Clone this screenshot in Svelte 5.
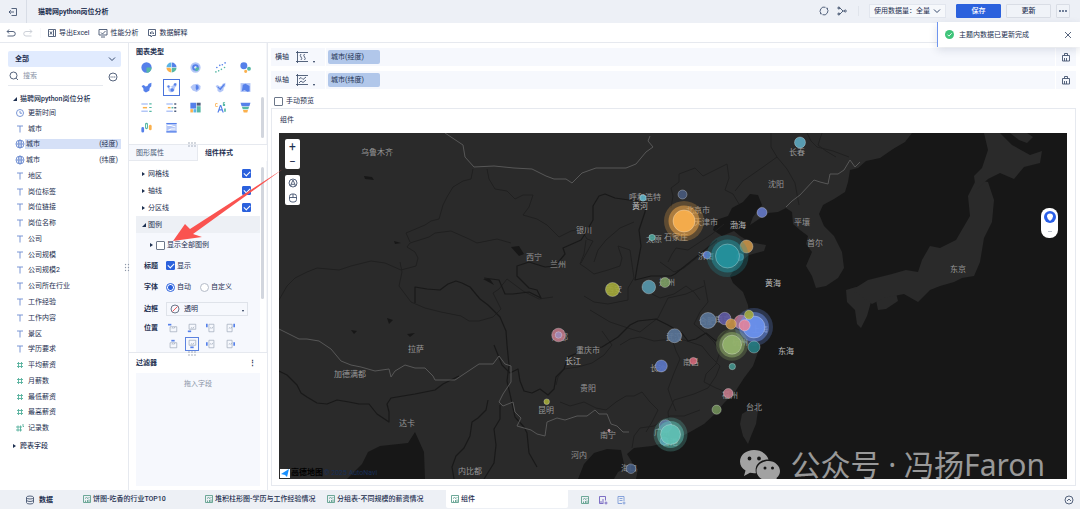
<script lang="ts">
	type Shape = [color: string, d: string];

	const blue = '#5580ea';
	const pale = '#b3c6f7';
	const green = '#56b8a4';
	const orange = '#fbb04c';

	const disc = (x: number, y: number, r: number) =>
		`M${x - r} ${y}a${r} ${r} 0 1 0 ${2 * r} 0a${r} ${r} 0 1 0 ${-2 * r} 0z`;

	const region = 'M.6 4.400L3 3.400 5 5 7 4.400 8.400 2 11.400.8 11.200 4.600 9.600 6.400 9 9.600 5.400 11.400 2.800 9.800 2.600 7.200z';

	const chartTypes: { name: string; shapes: Shape[] }[] = [
		{ name: '饼图', shapes: [[blue, disc(6, 6, 5.6)], [green, 'M6 6h5.6a5.6 5.6 0 0 1-5.6 5.6z']] },
		{
			name: '多层饼图',
			shapes: [
				[blue, 'M6.3 5.7V.5A5.300 5.300 0 0 1 11.500 5.7z'],
				[orange, 'M.5 6.300h4L5.700 7.500v4A5.300 5.300 0 0 1 .5 6.300z'],
				[green, 'M6.300 6.300h5.200a5.300 5.300 0 0 1-5.200 5.200z'],
				['#5ab4e6', 'M.5 5.700A5.300 5.300 0 0 1 5.700.5v5.200z']
			]
		},
		{
			name: '玫瑰图',
			shapes: [[pale, disc(6, 6, 5.6)], [blue, disc(6, 6, 3.6)], ['#fff', disc(6, 6, 1.3)], [green, 'M6 6h4a4 4 0 0 1-4 4z']]
		},
		{
			name: '散点图',
			shapes: [
				[blue, disc(2, 6, 0.9) + disc(5.2, 3.6, 0.9) + disc(8, 3, 0.9) + disc(11, 1, 0.9)],
				[green, disc(1, 10.8, 0.9) + disc(4, 9.6, 0.9) + disc(7, 8, 0.9) + disc(10.4, 6, 0.9)]
			]
		},
		{ name: '气泡图', shapes: [[blue, disc(4.2, 4, 3.8)], [green, disc(9.8, 7.4, 2.1)], [orange, disc(6.2, 10.2, 1.7)]] },
		{ name: '区域地图', shapes: [[blue, region]] },
		{
			name: '点地图',
			shapes: [[pale, region], ['#fff', disc(5, 6, 1.2)], [blue, disc(6.8, 8.800, 1.900) + disc(10, 2.8, 1.400) + disc(2.800, 5, 1.200)]]
		},
		{
			name: '热力地图',
			shapes: [[pale, 'M.4 5.400l3-2.800 4.800-.8 3.400 2.600-.4 3.600-3.800 3L3 9.200z'], [blue, 'M6.400 3l2.600.8.6 3-2.400 2.600-1-2.600z']]
		},
		{
			name: '流向地图',
			shapes: [[pale, region], [blue, 'M5.400 6.800L10 2l.8 1-5 6L2.600 5.800l.8-1z']]
		},
		{ name: '热力区域图', shapes: [[pale, 'M.6 1.2h10.800v9.6H.6z'], [blue, 'M3 3l3-1 4.400 2.400v5.600l-2.400.6-3-2-3 1.600.6-4z']] },
		{
			name: '分组表',
			shapes: [[pale, 'M.4 1.400h7v1.600h-7zM.4 9.400h7V11h-7z'], [orange, 'M2 5.400h4.600V7H2z'], [green, 'M9 1.400h2.600v1.200H9zM9 5.400h2.600v1.200H9zM9 9.600h2.600v1.200H9z']]
		},
		{
			name: '交叉表',
			shapes: [[pale, 'M.4 1.400h7v1.600h-7zM.4 9.400h7V11h-7z'], [orange, 'M2 5.400h3V7H2z'], [green, 'M6 5.400h2V7H6z'], ['#50607e', 'M9 1.4h2.2v1.6H9zM9 5.4h2.2V7H9zM9 9.4h2.2V11H9z']]
		},
		{
			name: '矩形树图',
			shapes: [[blue, 'M.4.8h6.400v6.400H.4z'], ['#50607e', 'M7.4.8h4.200V4H7.400z'], [green, 'M7.4 4.600h4.200v6.800H7.400z'], [orange, 'M.4 7.8h2.800v3.600H.4z'], ['#5ab4e6', 'M3.800 7.8h3v3.600h-3z']]
		},
		{
			name: '词云',
			shapes: [[blue, 'M2.600 11.400l2.800-8h1.400l2.800 8H8.200l-.7-2.200H4.700l-.7 2.200zM5.100 8h2L6.100 5z'], [orange, 'M3 1.8a2 2 0 1 0 0 3v-1a1.200 1.200 0 1 1 0-1z'], [green, 'M8.600.4h2.400v1H9.600v.7H11v2.200H8.600zM10 7h1.8v3.6H10z']]
		},
		{ name: '漏斗图', shapes: [[blue, 'M.6.8h10.800L10.200 4.600H1.800z'], [green, 'M2.100 5.2h7.800L9 8H3z'], [orange, 'M3.3 8.6h5.4L8 11.400H4z']] },
		{
			name: '箱形图',
			shapes: [[blue, 'M.4 7a1.500 1.500 0 0 1 3 0v3a1.500 1.500 0 0 1-3 0z'], [green, 'M4.400 2.400a1.600 1.600 0 0 1 3.200 0v4a1.600 1.600 0 0 1-3.200 0zM5.500 2.400v4h1v-4z'], [orange, 'M8.600 4.600a1.500 1.500 0 0 1 3 0v3a1.500 1.500 0 0 1-3 0z']]
		},
		{ name: '桑基图', shapes: [[pale, 'M.4 1h11.200v10.4H.4z'], ['#fff', 'M1.4 3.200h4l5 1.600v1.200l-5-1.600h-4zM1.400 9l4-2h5v1.2H6L3.400 9.400z'], [blue, 'M.4 1h11.200v1.200H.4zM.4 10.200h11.200v1.200H.4z']] }
	];
	const activeChart = '点地图';

	const fields = [
		{ name: '更新时间', kind: 'date' },
		{ name: '城市', kind: 'text' },
		{ name: '城市', kind: 'geo', note: '(经度)', active: true },
		{ name: '城市', kind: 'geo', note: '(纬度)' },
		{ name: '地区', kind: 'text' },
		{ name: '岗位标签', kind: 'text' },
		{ name: '岗位链接', kind: 'text' },
		{ name: '岗位名称', kind: 'text' },
		{ name: '公司', kind: 'text' },
		{ name: '公司规模', kind: 'text' },
		{ name: '公司规模2', kind: 'text' },
		{ name: '公司所在行业', kind: 'text' },
		{ name: '工作经验', kind: 'text' },
		{ name: '工作内容', kind: 'text' },
		{ name: '景区', kind: 'text' },
		{ name: '学历要求', kind: 'text' },
		{ name: '平均薪资', kind: 'number' },
		{ name: '月薪数', kind: 'number' },
		{ name: '最低薪资', kind: 'number' },
		{ name: '最高薪资', kind: 'number' },
		{ name: '记录数', kind: 'count' }
	];

	const lineOptions = ['网格线', '轴线', '分区线'];

	// marker is where the legend sits around the frame
	const positions = [
		{ name: '左上', marker: 'M0 1h4v2H0z', frame: 'M2.5 4.5h8v6h-8z' },
		{ name: '左下', marker: 'M1 9h4v2H1z', frame: 'M2.5 1.5h8v6h-8z' },
		{ name: '左侧上', marker: 'M0 1h2v4H0z', frame: 'M3.5 1.5h6v9h-6z' },
		{ name: '右侧上', marker: 'M10 1h2v4h-2z', frame: 'M2.5 1.5h6v9h-6z' },
		{ name: '上', marker: 'M4 1h4v2H4z', frame: 'M2.5 4.5h8v6h-8z' },
		{ name: '下', marker: 'M4 9h4v2H4z', frame: 'M2.5 1.5h8v6h-8z' },
		{ name: '左', marker: 'M0 4h2v4H0z', frame: 'M3.5 1.5h6v9h-6z' },
		{ name: '右', marker: 'M10 4h2v4h-2z', frame: 'M2.5 1.5h6v9h-6z' }
	];

	const shelves = [
		{ label: '横轴', field: '城市(经度)', wave: 'M5 3q-1.500 1.500 0 3t0 3M8.500 3q-1.500 1.500 0 3t0 3' },
		{ label: '纵轴', field: '城市(纬度)', wave: 'M3 5l2-1.500 2 2 3-2.500M3 9l2-2 2 1.500L10 6' }
	];

	const sheets = [
		{ name: '饼图-吃香的行业TOP10' },
		{ name: '堆积柱形图-学历与工作经验情况' },
		{ name: '分组表-不同规模的薪资情况' },
		{ name: '组件', active: true }
	];

	const places = [
		['乌鲁木齐', 377, 152], ['呼和浩特', 645, 197], ['北京市', 698, 210], ['天津市', 706, 222],
		['石家庄', 676, 237], ['太原', 654, 239], ['银川', 584, 230], ['西宁', 534, 257],
		['兰州', 558, 264], ['西安', 614, 289], ['郑州', 667, 282], ['成都', 560, 337],
		['重庆市', 588, 350], ['拉萨', 416, 349], ['加德满都', 350, 374], ['贵阳', 588, 388],
		['昆明', 546, 410], ['达卡', 407, 423], ['南宁', 608, 435], ['河内', 579, 455],
		['内比都', 470, 471], ['海口', 629, 468], ['长春', 797, 152], ['沈阳', 776, 184],
		['平壤', 802, 222], ['首尔', 815, 243], ['济南', 706, 256], ['合肥', 707, 321],
		['武汉', 674, 337], ['长沙', 658, 368], ['南昌', 691, 362], ['杭州', 740, 342],
		['南京', 723, 319], ['上海', 760, 329], ['福州', 730, 395], ['台北', 754, 407],
		['广州', 662, 432], ['香港', 670, 442], ['东京', 958, 269]
	] as const;

	const waters = [
		['黄河', 640, 206], ['长江', 573, 361], ['渤海', 738, 225], ['黄海', 773, 283], ['东海', 786, 351]
	] as const;

	// x, y, radius, colour, halo radius (0 for none)
	const bubbles = [
		[800, 142.5, 5.5, '#5da8c0', 0], [682.5, 194.5, 4.500, '#485a7c', 0], [643, 198, 3.200, '#5fb2c8', 0],
		[684, 221, 11, '#fbb04c', 20], [762, 212.5, 5, '#6478c6', 0], [652, 237.5, 3.200, '#4fa59c', 0],
		[746.5, 246.5, 6.500, '#c99448', 0], [707, 255, 3.800, '#5d7cd0', 0], [740, 257, 3.500, '#3d7a98', 0],
		[727.5, 256, 12, '#25949f', 21], [612.500, 289.5, 7, '#a3a838', 0], [648.800, 287, 6.800, '#5899ae', 0],
		[665, 282.5, 5, '#7a9a60', 0], [558.500, 335, 6.800, '#bd7685', 0], [558.500, 335, 3.300, '#9d8ab8', 0],
		[708, 320.5, 8, '#5a7699', 0], [724.700, 318.5, 6.200, '#5f5aa3', 0], [741, 322, 7, '#c06c80', 0],
		[754, 327, 11, '#6c92ef', 19], [731, 324, 5.300, '#c99448', 0], [744.600, 325.3, 5.500, '#e2839b', 0],
		[749, 314.8, 4.500, '#a3a83e', 0], [732, 344.7, 9.500, '#93b36b', 16], [754, 347, 6, '#267c82', 0],
		[732.300, 366.5, 3.200, '#45938d', 0], [693.300, 361, 3.600, '#cf6474', 0], [674.500, 335.7, 7, '#5a7699', 0],
		[661.300, 366, 6, '#5b77c6', 0], [728.300, 393.3, 4.800, '#bf7686', 0], [716.600, 409.7, 4.600, '#718f59', 0],
		[665.500, 426, 6.300, '#5f669f', 0], [664, 441, 4, '#5070b0', 0], [670.500, 434.5, 10, '#60c2b6', 17],
		[546.700, 401.7, 2.800, '#a3a838', 0], [609, 430.5, 1.200, '#d890a0', 0], [631, 468.7, 4.800, '#455c82', 0]
	] as const;

	const land = [
		'M279 133H912L905 142 893 149 880 158 866 161 858 168 850 170 848 182 845 192 834 199 823 205 819 214 824 226 834 236 842 252 844 268 838 278 826 286 816 288 812 276 806 266 812 252 806 244 808 236 800 230 793 224 792 212 786 208 778 212 768 213 759 219 750 225 753 217 762 205 758 195 750 194 743 202 732 208 728 216 716 220 713 230 722 236 734 231 740 236 750 242 766 245 764 251 749 255 738 264 730 276 733 283 743 292 748 305 749 315 756 322 754 332 746 334 756 340 758 352 753 366 744 378 735 392 724 403 716 413 704 424 690 432 675 440 652 446 634 448 627 454 632 462 630 468 624 464 621 450 607 449 594 453 584 464 578 479H425L424 452 415 432 408 443 380 446 368 452 362 464 347 479H279z',
		'M742 414l8-5 8 1-2 14-5 12-3 8-5-8-3-12z',
		'M618 472l10-5 10 2-2 10h-22z',
		'M846 290l10-3 14 3 1 12-4 14-6 12-4-4-2-14-8-8z',
		'M876 300l12-4 8-3 2 8-12 8-8 1z',
		'M852 290l16-10 24-6 14-4 12 2 4-12 8-14 10 2 16-8 14-24-2-20 8-16 12 2 6 18-2 22-8 16-4 24-6 14-12 2-8 4-14 4-10 4-12 12-14-8-20 4-12 6z',
		'M976 190l-2-14 8-8 6-18-4-17h16l12 12 18 10 12-4-2 12-16 4-10 12-14-6-12 6z',
		'M1010 133h17l6 4-6 6-8-3z'
	];

	const provinces = [
		'M279 300l8-14 8-8 12-6 10-4 22 2 12-4 20-5 14 2 16 7 15-4 2-8-3-6-8-5 3-4 19-6 6-4 16-2 18 8 8 4 20-4 14 4',
		'M473 169l-2 10-8 2-10 6-6 10-4 8-4 14-8 2-6 4-19 8 4 9',
		'M400 262l2 10-3 14 12 16 14 6 16 4 20 4 8 5 10 0 14-4 8-8-8-16 6-4 8-10 16 12 16 8 14-2',
		'M487 169l2 10 6 10 12 2 8 8 8-4 10 0-4 12-6 8 14 4 10 6 6 6 6 6 12-6 10-2 6 10 6 2-12 22',
		'M594 262l4-12 8-10 14-12 14-6M586 240l-2 14-4 10 6 4 8 6 14-4 12-4 2-8-4-12 12 4 4 28-6 10 0 12-20 4-14-2-10-6',
		'M590 310l10 6 10 6 12 4 18 6 10-8 8-6 10-20 18-4 18-8M620 345l10-6 10-2 14 4 18-2 4 12 4 8-6 14-6 16 4 12 4 10',
		'M556 385l2-8 6-8 14-2 14-4 12-8 8-10-10-14M560 402l10 4 14-4 12 6 10 2 10-8 10-6 8 0 8-4 8 10 8 8-6 12-6 10',
		'M671 208l2-12-2-8 8-6 0-8 16-6 8 8 12-6 12-6 2 14-4 12 8 4 6 10M735 191l8-10 20-14 14-10-6-10 0-14M777 157l10 12 8 14 4 22',
		'M668 262l4-8 4-6 12 2 12-8 12-8 12-10M660 262l14 10 10-4 20-16M704 280l4 22-8 10-6 12 10 8 10 10 6 10-4 12-10 10-2 8 12 6 10 4',
		'M672 340l12 0 18 6 8 10 10 10-4 10-8 12-14 6-20 6-6 12 2 22M700 300l-6-8-8-6-12 8-14 4-8-4-10-6M632 448l2-12 6-8 14-2 16-10 14 0 16-6',
		'M822 133l-4 12 8 6 10 6M807 133l4 8 6 6 16 4 16 6'
	];

	const rivers = [
		'M415 303l0-16 12 2 13 1 8-6 8-3 6 2 8 4 10 12 8 6 12 12 6 14 1 14 2 20-2 16 5 22 3 14 9 10 3 6 2 20 8 14',
		'M484 278l15 2 6 14 8 0 16-2 8 4 4 2-4-8-8-2-12-12 0-10 12-4 16 5 10-1 10-12-2-6 18-8 4-6 8-14 0-14 6-10 6-2 10 4 14 2 18 2-2 10-6 18 2 16-4 22-2 12 16-4 20 0 4-2 20-16 22-18',
		'M494 345l8 20 8 8 8-4 2 12 4 10 8 2 8-4 8 6 6-6 2-12 8-8 4-12 14-6 20-4 16-10 12-12 8-4 18-2 12 6 14 8 6 8 8-2 10-6 10 8 10-10 10-6 16-4',
		'M279 371l8 4 10 10 4 8 6 4 10 6 10 1 10-4 12 2 10 2 10 0 8 10 12 8 0-10-2-8 4-6 12-2 12-2 20-4 8-6 16-8',
		'M488 400l-2 10-8 8-6 4-2 14-6 12-8 8-4 11 2 12M500 405l0 14-6 10 2 16-2 18-10 16'
	];

	const frontiers = [
		'M445 133l18 12 2 12 9 10 20-1 20 2 18 1 14 7 8 3 12 0 6 4 10-10 14-5 30 0 10-4 10-12 7-5-5-6 2-5',
		'M279 329l8 4 12 6 8 0 12 2 12 8 10 12 10 4 10 2 14 4 14-2 2 8 4-6 10-6 10 3 10 0 8 8 2 4 20 0 12-8 12-8 14 0 6-8 6 8 6 2 0 16-8 12-4 8 4 4 10-4 2 10 6 6-4 8 14 4 6 4 8 2 2-14 10-4 8 2 12-4 10 0 8-6 4 4 8 0 4 10 6 2 6 6 6 0',
		'M786 207l6-6 8-6 14-15 6 2 8 2 2-10 8 0 6-4 6-10 5 7 5-5'
	];
</script>

<svelte:head>
	<title>猫聘网python岗位分析</title>
</svelte:head>

{#snippet chevron()}
	<svg class="chevron" viewBox="0 0 8 8"><path d="M1 2.500l3 3 3-3" /></svg>
{/snippet}

{#snippet fieldIcon(kind: string)}
	<svg class="icon field-icon {kind}" viewBox="0 0 10 10">
		{#if kind === 'date'}
			<circle cx="5" cy="5" r="3.500" /><path d="M5 3v2.200h2" />
		{:else if kind === 'geo'}
			<circle cx="5" cy="5" r="4" /><ellipse cx="5" cy="5" rx="1.800" ry="4" /><path d="M1 5h8M5 1v8" />
		{:else if kind === 'text'}
			<path d="M2 2h6M5 2v6.500" />
		{:else if kind === 'count'}
			<path d="M3 2.500v6M5.500 2.500v6M1 4h6M1 7h6M8 1v2.500h1" />
		{:else}
			<path d="M3.500 2v6M6.500 2v6M2 3.500h6M2 6.500h6" />
		{/if}
	</svg>
{/snippet}

{#snippet grip()}
	<svg class="grip" viewBox="0 0 8 5"><path d={disc(1, 1, 0.7) + disc(4, 1, 0.7) + disc(7, 1, 0.7) + disc(1, 4, 0.7) + disc(4, 4, 0.7) + disc(7, 4, 0.7)} /></svg>
{/snippet}

{#snippet sheetIcon()}
	<svg class="icon sheet-icon" viewBox="0 0 10 10"><path d="M1.500 1.500h7v7h-7zM3 4.500l1.500-1 1.500 1L7.500 3M3.500 8V6.500M5.500 8V6M7 8V5.500" /></svg>
{/snippet}

<div class="app">
	<header class="topbar">
		<button class="back" aria-label="退出">
			<svg class="icon" viewBox="0 0 10 10"><path d="M3.500 1.500h5v7h-5M6 5H1M2.800 3.200L1 5l1.800 1.800" /></svg>
		</button>
		<h1>猫聘网python岗位分析</h1>
		<div class="top-actions">
			<button class="plain" aria-label="刷新">
				<svg class="icon" viewBox="0 0 10 10"><path d="M2.200 7.800A4 4 0 0 1 6.500 1.300M7.800 2.200A4 4 0 0 1 3.500 8.700M1 7.500l1.500.5M9 2.500L7.500 2" /></svg>
			</button>
			<button class="plain link-icon" aria-label="关联">
				<svg class="icon" viewBox="0 0 10 10"><path d="M1 2h2L6 5h1.500M1 8h2L6 5" /><circle cx="1.800" cy="2" r="1" /><circle cx="1.800" cy="8" r="1" /><circle cx="8.300" cy="5" r="1" /></svg>
			</button>
			<div class="select amount">
				<select aria-label="使用数据量"><option>使用数据量：全量</option></select>
				{@render chevron()}
			</div>
			<button class="btn primary">保存</button>
			<button class="btn">更新</button>
			<button class="btn more" aria-label="更多">
				<svg viewBox="0 0 8 2"><path d={disc(1, 1, 0.9) + disc(4, 1, 0.9) + disc(7, 1, 0.9)} /></svg>
			</button>
		</div>
	</header>

	<nav class="toolbar">
		<button class="plain" aria-label="撤销"><svg class="icon" viewBox="0 0 10 10"><path d="M3 1.500L1.200 3.500 3 5.500M1.200 3.500H7a2.200 2.200 0 0 1 0 4.500H1.500" /></svg></button>
		<button class="plain redo" aria-label="重做" disabled><svg class="icon" viewBox="0 0 10 10"><path d="M7 1.500l1.800 2L7 5.500M8.800 3.500H3a2.200 2.200 0 0 0 0 4.500h5.500" /></svg></button>
		<button class="plain tool"><svg class="icon" viewBox="0 0 10 10"><path d="M6.500 1.500h2v7h-2M1.500 1.500h5v7h-5zM3 3.500l2 3M5 3.500l-2 3" /></svg>导出Excel</button>
		<button class="plain tool"><svg class="icon" viewBox="0 0 10 10"><path d="M1 1.500h8v5.500H1zM3 4.500L4.500 6l3-3M3 9h4" /></svg>性能分析</button>
		<button class="plain tool"><svg class="icon" viewBox="0 0 10 10"><path d="M1.500 1.500h7v6h-3l-1.500 1.500V7.500H1.500zM3.500 4v2M5 3v3M6.500 4.500V6" /></svg>数据解释</button>
	</nav>

	<div class="workspace">
		<aside class="fields">
			<div class="select scope">
				<select aria-label="字段范围"><option>全部</option></select>
				{@render chevron()}
			</div>
			<div class="search-row">
				<label class="search">
					<svg class="icon" viewBox="0 0 10 10"><circle cx="4.500" cy="4.500" r="3.500" /><path d="M7.200 7.200L9 9" /></svg>
					<input type="text" placeholder="搜索" aria-label="搜索" />
				</label>
				<button class="plain" aria-label="更多选项">
					<svg class="icon" viewBox="0 0 10 10"><circle cx="5" cy="5" r="4" /><path d="M2.500 5h5" stroke-dasharray="1.200 .6" /></svg>
				</button>
			</div>
			<div class="group open">猫聘网python岗位分析</div>
			<ul>
				{#each fields as field}
					<li class:active={field.active}>
						{@render fieldIcon(field.kind)}
						<span class="field-name" class:tight={field.note}>{field.name}<span>{field.note ?? ''}</span></span>
					</li>
				{/each}
			</ul>
			<div class="group">跨表字段</div>
		</aside>

		<section class="config">
			<div class="charts">
				<div class="charts-body">
					<h2>图表类型</h2>
					<div class="chart-grid">
						{#each chartTypes as type}
							<button class="chart" class:selected={type.name === activeChart} aria-label={type.name}>
								<svg viewBox="0 0 12 12">
									{#each type.shapes as [color, d]}
										<path fill={color} fill-rule="evenodd" {d} />
									{/each}
								</svg>
							</button>
						{/each}
					</div>
				</div>
				<div class="track"><div class="thumb short"></div></div>
			</div>

			<div class="tabs">
				<button>图形属性</button>
				<button class="current">组件样式</button>
				{@render grip()}
			</div>

			<div class="style-panel">
				<div class="style-body">
					{#each lineOptions as option}
						<label class="option group">{option}<input type="checkbox" checked /></label>
					{/each}
					<div class="option group open legend-head">图例</div>
					<div class="legend">
						<div class="form-row all-row group"><label><input type="checkbox" />显示全部图例</label></div>
						<div class="form-row title-row">
							<b>标题</b><label><input type="checkbox" checked />显示</label>
						</div>
						<div class="form-row font-row">
							<b>字体</b>
							<label><input type="radio" name="font" checked />自动</label>
							<label><input type="radio" name="font" />自定义</label>
						</div>
						<div class="form-row">
							<b>边框</b>
							<div class="select border-select">
								<svg class="none-icon" viewBox="0 0 10 10"><circle cx="5" cy="5" r="4" /><path d="M2.500 7.500l5-5" /></svg>
								<select aria-label="边框"><option>透明</option></select>
								<i class="caret"></i>
							</div>
						</div>
						<div class="form-row position-row">
							<b>位置</b>
							<div class="positions">
								{#each positions as pos}
									<button class:picked={pos.name === '下'} aria-label={pos.name}>
										<svg viewBox="0 0 12 12"><path class="frame" d={pos.frame} /><path class="frame" d="M4.500 6.500l1.500-1 1 1 1.500-2" /><path fill={blue} d={pos.marker} /></svg>
									</button>
								{/each}
							</div>
						</div>
					</div>
				</div>
				<div class="track"><div class="thumb"></div></div>
			</div>

			<div class="filter">
				{@render grip()}
				<h2>过滤器<button class="plain" aria-label="过滤器菜单">⋮</button></h2>
				<div class="drop">拖入字段</div>
			</div>
			<span class="side-grip">{@render grip()}</span>
		</section>

		<main>
			{#each shelves as shelf}
				<div class="shelf">
					<div class="shelf-label">
						{shelf.label}
						<svg viewBox="0 0 12 12"><path d="M1.500 0v12M0 1.500h12M0 10.500h12" /><path d={shelf.wave} /></svg>
						<i class="caret"></i>
					</div>
					<div class="shelf-fields"><span class="pill">{shelf.field}</span></div>
					<button class="plain clear" aria-label="清空">
						<svg class="icon" viewBox="0 0 10 10"><path d="M1.500 3.500h7V9h-7zM3.500 3.500V1.500h3v2M3.500 9V6M5.500 9V6" /></svg>
					</button>
				</div>
			{/each}
			<label class="preview"><input type="checkbox" />手动预览</label>

			<div class="card">
				<h3>组件</h3>
				<div class="map">
					<svg class="map-canvas" viewBox="279 133 788 346" preserveAspectRatio="xMidYMid slice">
						<g class="land">{#each land as d}<path {d} />{/each}</g>
						<g class="provinces">{#each provinces as d}<path {d} />{/each}</g>
						<g class="rivers">{#each rivers as d}<path {d} />{/each}</g>
						<g class="lakes"><path d="M511 247l8-1 5 8-5 2zM364 176l8 1 2 3-9-1zM387 318l6 2-4 4zM407 334l8-1-5 4zM351 330l6 1-3 3zM394 241l7 2-6 1zM483 279l7 0 4 6z" /></g>
						<g class="frontiers">{#each frontiers as d}<path {d} />{/each}</g>
						{#each places as [name, x, y]}
							<text class="place" {x} {y}>{name}</text>
						{/each}
						{#each waters as [name, x, y]}
							<text class="place water" {x} {y}>{name}</text>
						{/each}
						{#each bubbles as [x, y, r, color, halo]}
							{#if halo}
								<circle cx={x} cy={y} r={halo} fill={color} opacity="0.25" />
								<circle cx={x} cy={y} r={(halo + r) / 2} fill={color} opacity="0.5" />
							{/if}
							<circle class="bubble" cx={x} cy={y} {r} fill={color} />
						{/each}
					</svg>
					<div class="map-tools">
						<div><button aria-label="放大">+</button><button aria-label="缩小">−</button></div>
						<div>
							<button aria-label="定位"><svg class="icon" viewBox="0 0 10 10"><circle cx="5" cy="5" r="4" /><path d="M2.500 7.500L5 2l2.500 5.500L5 6z" /></svg></button>
							<button aria-label="框选"><svg class="icon" viewBox="0 0 10 10"><rect x="1.500" y="1" width="7" height="8" rx="2.500" /><path d="M1.500 4.500h7M5 1v3.500" /></svg></button>
						</div>
					</div>
					<div class="float">
						<svg viewBox="0 0 12 12"><circle cx="6" cy="6" r="6" fill="#2a5fe8" /><path fill="#fff" d="M3 5.500a3 3 0 0 1 6 0q0 2-3 4.500-3-2.500-3-4.500z" /></svg>
						<i></i>
					</div>
					<div class="credit">
						<svg viewBox="0 0 10 10"><path fill="#fff" d="M0 1h10v9H0z" /><path fill="#1890ff" d="M1 6l8-5-2 8-2-2z" /></svg>
						<b>高德地图</b><small>© 2025 AutoNavi</small>
					</div>
					<div class="watermark">
						<svg viewBox="0 0 40 31"><path fill-rule="evenodd" d={'M14 0C6 0 0 5 0 11.500c0 4 2 7 5.500 9L4 26l6-3.200q3 .7 6 .4C14 15 20 9.500 28.500 9.500 27 4 21 0 14 0z' + disc(9.500, 8.500, 1.900) + disc(19, 8.500, 1.900)} /><path fill-rule="evenodd" d={'M28.500 11C21 11 16.500 16 16.500 21s5 9.500 12 9.500q2.500 0 4.500-.6l4.500 2-1-4q3.500-2.800 3.500-6.900C40 16 35 11 28.500 11z' + disc(25, 18, 1.500) + disc(32.500, 18, 1.500)} /></svg>
						公众号 · 冯扬Faron
					</div>
				</div>
			</div>
		</main>
	</div>

	<footer>
		<button class="data"><svg class="icon" viewBox="0 0 10 10"><ellipse cx="5" cy="2.500" rx="3.500" ry="1.500" /><path d="M1.500 2.500v5a3.500 1.500 0 0 0 7 0v-5M1.500 5a3.500 1.500 0 0 0 7 0" /></svg>数据</button>
		{#each sheets as sheet}
			<button class="sheet" class:active={sheet.active}>{@render sheetIcon()}{sheet.name}</button>
		{/each}
		<div class="add-sheets">
			<button class="plain" aria-label="添加组件">{@render sheetIcon()}</button>
			<button class="plain" aria-label="添加仪表板"><svg class="icon dash-icon" viewBox="0 0 10 10"><path d="M1.500 1.500h6v4M1.500 1.500v7h4M3 6v2M5 4v4M8 6.500v3M6.500 8h3" /></svg></button>
			<button class="plain" aria-label="添加报告"><svg class="icon doc-icon" viewBox="0 0 10 10"><path d="M2 1.500h6v4.500M2 1.500v7h4M3.500 3.500h3M3.500 5.500h3M8 6.500v3M6.500 8h3" /></svg></button>
		</div>
		<button class="plain collapse" aria-label="展开"><svg class="icon" viewBox="0 0 10 10"><circle cx="5" cy="5" r="4" /><path d="M3 6l2-2 2 2" /></svg></button>
	</footer>

	<div class="toast" role="status">
		<svg class="ok" viewBox="0 0 10 10"><circle cx="5" cy="5" r="5" /><path d="M2.800 5.200l1.600 1.600 3-3.200" /></svg>
		<span>主题内数据已更新完成</span>
		<button class="plain" aria-label="关闭"><svg class="icon" viewBox="0 0 10 10"><path d="M2 2l6 6M8 2L2 8" /></svg></button>
	</div>

	<svg class="arrow" viewBox="0 0 111 73"><path d="M0 72L12 55l5 5L110 0 20 65l9 3z" /></svg>
</div>

<style>
	:global(body) {
		margin: 0;
	}

	.app {
		--ink: #1d2f50;
		--line: #e6e9ef;
		--shade: #f6f8fd;
		position: relative;
		display: flex;
		flex-direction: column;
		height: 100vh;
		overflow: hidden;
		background: #fff;
		color: var(--ink);
		font: 7px/10px Roboto, 'Noto Sans CJK SC', sans-serif;
	}

	.app * {
		box-sizing: border-box;
	}

	button,
	input,
	select {
		margin: 0;
		padding: 0;
		border: 0;
		background: none;
		color: inherit;
		font: inherit;
		appearance: none;
	}

	h1,
	h2,
	h3 {
		margin: 0;
		font: inherit;
		font-weight: 700;
	}

	svg {
		display: block;
		flex: none;
	}

	.icon {
		width: 10px;
		height: 10px;
		fill: none;
		stroke: #44546f;
		stroke-width: 0.9;
	}

	.plain {
		display: flex;
		align-items: center;
		gap: 2px;
	}

	.chevron {
		width: 8px;
		height: 8px;
		fill: none;
		stroke: #34486b;
	}

	.select {
		display: flex;
		align-items: center;
	}

	.select select {
		flex: 1;
		min-width: 0;
	}

	.topbar {
		display: flex;
		align-items: center;
		height: 23px;
		background: #edf0f6;
	}

	.back {
		display: flex;
		align-items: center;
		justify-content: center;
		width: 27px;
		height: 100%;
		border-right: 1px solid #d8dde6;
	}

	h1 {
		margin-left: 11px;
	}

	.top-actions {
		display: flex;
		align-items: center;
		gap: 5px;
		margin-left: auto;
		padding: 0 10px 2px 0;
	}

	.link-icon {
		padding: 0 11px 0 3px;
		border-right: 1px solid #e0e4eb;
	}

	.amount {
		width: 77px;
		height: 14px;
		margin: 0 5px;
		padding: 0 4px;
		border: 1px solid #e2e6ee;
		background: #f6f8fb;
	}

	.btn {
		width: 45px;
		height: 14px;
		border: 1px solid #d9dde5;
		border-radius: 1px;
		background: #f0f3f8;
		font-weight: 500;
	}

	.btn.primary {
		border-color: #2b61dd;
		background: #2b61dd;
		color: #fff;
	}

	.btn.more {
		display: grid;
		place-items: center;
		width: 14px;
	}

	.more svg {
		width: 8px;
		height: 2px;
		fill: #34486b;
	}

	.toolbar {
		display: flex;
		align-items: center;
		height: 20px;
		padding-left: 6px;
		border-bottom: 1px solid var(--line);
	}

	.redo {
		margin: 0 6px 0 7px;
		padding-right: 7px;
		border-right: 1px solid var(--line);
		opacity: 0.3;
	}

	.tool {
		margin-right: 9px;
	}

	.workspace {
		display: flex;
		flex: 1;
		min-height: 0;
	}

	.fields {
		width: 129px;
		padding: 8px 7px 0 8px;
		border-right: 1px solid var(--line);
	}

	.scope {
		height: 16px;
		padding: 0 5px 0 7px;
		border-radius: 2px;
		background: #e1ebfe;
		font-weight: 700;
	}

	.search-row {
		display: flex;
		justify-content: space-between;
		height: 19px;
		padding-right: 3px;
	}

	.search {
		display: flex;
		align-items: center;
		gap: 4px;
		width: 95px;
		padding-left: 1px;
		border-bottom: 1px solid var(--line);
	}

	.search input {
		flex: 1;
		min-width: 0;
		outline: none;
	}

	.search input::placeholder {
		color: #8a94a6;
	}

	.group {
		display: flex;
		align-items: center;
		gap: 5px;
	}

	.group::before {
		content: '';
		border: 2px solid transparent;
		border-left: 3px solid var(--ink);
		border-right: 0;
	}

	.group.open::before {
		border: 2px solid transparent;
		border-right-color: var(--ink);
		border-bottom-color: var(--ink);
		margin-right: -1px;
	}

	.fields > .group {
		height: 13px;
		margin-top: 6px;
		padding-left: 5px;
		gap: 4px;
		font-weight: 500;
	}

	.fields > ul + .group {
		margin-top: 3px;
	}

	ul {
		display: grid;
		grid-auto-rows: 1fr;
		height: 331px;
		margin: 0;
		padding: 0;
		list-style: none;
	}

	li {
		display: flex;
		align-items: center;
		padding-left: 7px;
	}

	.field-icon {
		stroke: #6c8bd0;
	}

	.field-icon.number,
	.field-icon.count {
		stroke: #55b09c;
	}

	.field-name {
		display: flex;
		flex: 1;
		justify-content: space-between;
		margin-left: 3px;
		padding-right: 3px;
	}

	.field-name.tight {
		margin-left: 0;
		padding-left: 1px;
	}

	.active .field-name {
		background: #d5e0f7;
	}

	.config {
		position: relative;
		display: flex;
		flex-direction: column;
		width: 139px;
		border-right: 1px solid var(--line);
	}

	.charts {
		display: flex;
		height: 101px;
	}

	.charts-body {
		flex: 1;
		padding: 4px 3px 0 5px;
	}

	h2 {
		padding-left: 2px;
	}

	.chart-grid {
		display: grid;
		grid-template-columns: repeat(5, 1fr);
		grid-auto-rows: 20px;
	}

	.chart {
		place-self: center;
		padding: 2px;
		border: 1px solid transparent;
	}

	.chart.selected {
		border-color: #4a74dc;
	}

	.chart svg {
		width: 11px;
		height: 11px;
	}

	.track {
		width: 6px;
		padding: 6px 2px 0 0;
		border-right: 1px solid #f5f6f9;
	}

	.thumb {
		height: 132px;
		border-radius: 2px;
		background: #d2d6de;
	}

	.thumb.short {
		height: 41px;
		margin-top: 48px;
	}

	.tabs {
		position: relative;
		display: grid;
		grid-template-columns: 1fr 1fr;
		height: 17px;
	}

	.tabs button {
		padding-left: 7px;
		border: 1px solid var(--line);
		border-left: 0;
		background: var(--shade);
		color: #4d5c78;
		text-align: left;
	}

	.tabs .current {
		border-width: 1px 0 0;
		background: #fff;
		color: var(--ink);
		font-weight: 700;
	}

	.grip {
		position: absolute;
		top: -2px;
		left: 59px;
		width: 8px;
		height: 5px;
		fill: #8d97a8;
	}

	.side-grip {
		position: absolute;
		top: 222px;
		left: -4px;
		width: 5px;
		height: 8px;
	}

	.side-grip .grip {
		left: -2px;
		top: 0;
		transform: rotate(90deg);
	}

	.style-panel {
		display: flex;
		height: 191px;
	}

	.style-body {
		flex: 1;
		margin-right: 1px;
		padding: 4px 0 0 7px;
	}

	.option {
		height: 17px;
		padding: 0 9px 0 6px;
		gap: 3px;
	}

	.option input {
		margin-left: auto;
	}

	.legend-head {
		background: #edf0f5;
	}

	.legend {
		background: var(--shade);
	}

	.form-row {
		display: flex;
		align-items: center;
		height: 17px;
		padding-left: 8px;
	}

	.form-row b {
		width: 22px;
	}

	.form-row label {
		display: flex;
		align-items: center;
		gap: 2px;
		margin-right: 9px;
	}

	.form-row.all-row {
		height: 24px;
		padding-left: 14px;
		gap: 3px;
	}

	.form-row.font-row {
		height: 26px;
	}

	input[type='checkbox'] {
		position: relative;
		width: 9px;
		height: 9px;
		border: 1px solid #6c7789;
		border-radius: 1px;
		background: #fff;
	}

	input[type='checkbox']:checked {
		border-color: #2b61dd;
		background: #2b61dd;
	}

	input[type='checkbox']:checked::after {
		content: '';
		position: absolute;
		top: 0;
		left: 2px;
		width: 3px;
		height: 5px;
		border: solid #fff;
		border-width: 0 1px 1px 0;
		transform: rotate(45deg);
	}

	input[type='radio'] {
		width: 9px;
		height: 9px;
		border: 1px solid #b4bbc8;
		border-radius: 50%;
		background: #fff;
	}

	input[type='radio']:checked {
		border-color: #2b61dd;
		background: radial-gradient(#2b61dd 2px, #fff 3px);
	}

	.border-select {
		width: 82px;
		height: 14px;
		padding: 0 3px;
		border: 1px solid #dfe3ea;
		gap: 4px;
	}

	.none-icon {
		width: 10px;
		height: 10px;
		fill: none;
		stroke: #6c7789;
	}

	.none-icon path {
		stroke: #f05a5a;
	}

	.caret {
		align-self: flex-end;
		margin-bottom: 2px;
		border: 1px solid transparent;
		border-top: 2px solid var(--ink);
	}

	.form-row.position-row {
		height: auto;
		align-items: flex-start;
		padding-top: 3px;
	}

	.position-row b {
		padding-top: 3px;
	}

	.positions {
		display: grid;
		grid-template-columns: repeat(4, 19px);
		grid-auto-rows: 16px;
		margin-left: -3px;
	}

	.positions button {
		display: grid;
		place-items: center;
		width: 14px;
		height: 14px;
		place-self: center;
		border: 1px solid transparent;
	}

	.positions .picked {
		border-color: #5b82e0;
	}

	.positions svg {
		width: 10px;
		height: 10px;
	}

	.frame {
		fill: none;
		stroke: #9aa4b5;
		stroke-width: 0.8;
	}

	.filter {
		position: relative;
		display: flex;
		flex: 1;
		flex-direction: column;
		padding: 0 7px 4px;
		border-top: 1px solid var(--line);
	}

	.filter h2 {
		display: flex;
		align-items: center;
		justify-content: space-between;
		height: 20px;
		padding: 0 4px 0 0;
	}

	.drop {
		flex: 1;
		padding-top: 6px;
		background: var(--shade);
		color: #8a94a6;
		text-align: center;
	}

	main {
		display: flex;
		flex: 1;
		flex-direction: column;
		min-width: 0;
		padding: 5px 4px 4px 3px;
	}

	.shelf {
		display: flex;
		height: 18px;
		margin-bottom: 5px;
	}

	.shelf > * {
		background: var(--shade);
	}

	.shelf-label {
		display: flex;
		align-items: center;
		width: 54px;
		margin-right: 1px;
		padding-left: 4px;
	}

	.shelf-label svg {
		width: 12px;
		height: 12px;
		margin: 0 5px 0 7px;
		fill: none;
		stroke: #44546f;
		stroke-width: 0.9;
	}

	.shelf-fields {
		display: flex;
		flex: 1;
		align-items: center;
		padding-left: 2px;
	}

	.pill {
		width: 52px;
		height: 14px;
		padding: 2px 3px;
		border-radius: 2px;
		background: #b1c7ea;
	}

	.clear {
		justify-content: center;
		width: 20px;
		margin-left: 1px;
	}

	.preview {
		display: flex;
		align-items: center;
		gap: 3px;
		height: 14px;
		padding-left: 3px;
	}

	.card {
		display: flex;
		flex: 1;
		flex-direction: column;
		padding: 0 8px 6px 7px;
		border: 1px solid var(--line);
	}

	h3 {
		height: 24px;
		padding: 6px 1px;
		font-weight: 400;
	}

	.map {
		position: relative;
		flex: 1;
		min-height: 0;
		background: #171717;
	}

	.map-canvas {
		position: absolute;
		width: 100%;
		height: 100%;
	}

	.land {
		fill: #2a2a2a;
	}

	.provinces,
	.rivers,
	.frontiers {
		fill: none;
		stroke: #202020;
		stroke-linejoin: round;
	}

	.rivers {
		stroke: #191919;
		stroke-width: 1.2;
	}

	.lakes {
		fill: #171717;
	}

	.frontiers {
		stroke: #575757;
	}

	.place {
		fill: #989898;
		font-size: 8px;
		text-anchor: middle;
		dominant-baseline: central;
	}

	.place.water {
		fill: #bdbdbd;
	}

	.bubble {
		fill-opacity: 0.9;
		stroke: #ffffff66;
		stroke-width: 0.7;
	}

	.map-tools {
		position: absolute;
		top: 6px;
		left: 6px;
		display: grid;
		gap: 6px;
	}

	.map-tools div {
		width: 15px;
		border-radius: 2px;
		background: #fff;
	}

	.map-tools button {
		display: grid;
		place-items: center;
		width: 15px;
		height: 15px;
		font-size: 12px;
	}

	.float {
		position: absolute;
		top: 75px;
		right: 9px;
		display: flex;
		flex-direction: column;
		align-items: center;
		gap: 8px;
		width: 17px;
		height: 30px;
		padding-top: 3px;
		border-radius: 8px;
		background: #fff;
	}

	.float svg {
		width: 12px;
		height: 12px;
	}

	.float i {
		width: 4px;
		border-top: 1px solid #b9c0cc;
	}

	.credit {
		position: absolute;
		bottom: 1px;
		left: 1px;
		display: flex;
		align-items: center;
		gap: 1px;
		color: #000;
		font-size: 8px;
	}

	.credit svg {
		width: 10px;
		height: 10px;
	}

	.credit small {
		color: #182f57;
		font-size: 7px;
	}

	.watermark {
		position: absolute;
		right: 22px;
		bottom: -2px;
		display: flex;
		align-items: center;
		gap: 10px;
		color: #ffffff90;
		font: 30px/32px 'Noto Sans', 'Noto Sans CJK SC', sans-serif;
		white-space: nowrap;
	}

	.watermark svg {
		width: 40px;
		height: 31px;
		fill: #ffffff99;
	}

	footer {
		display: flex;
		height: 19px;
		background: #edf0f5;
	}

	footer button {
		display: flex;
		align-items: center;
		gap: 1px;
	}

	.data {
		width: 80px;
		padding-left: 25px;
		font-weight: 700;
		gap: 4px;
	}

	.sheet {
		width: 122px;
		margin-bottom: 1px;
		padding-left: 2px;
		border-radius: 0 0 2px 2px;
		font-weight: 500;
		white-space: nowrap;
	}

	.sheet.active {
		padding-left: 4px;
		background: #fff;
	}

	.sheet-icon {
		stroke: #5f9f8d;
	}

	.dash-icon {
		stroke: #7261c0;
	}

	.doc-icon {
		stroke: #7d9bd8;
	}

	.add-sheets {
		display: flex;
		gap: 8px;
		margin-left: 12px;
	}

	.collapse {
		margin-left: auto;
		padding-right: 6px;
	}

	.toast {
		position: absolute;
		top: 22px;
		right: 0;
		display: flex;
		align-items: center;
		gap: 5px;
		width: 143px;
		height: 25px;
		padding: 0 7px;
		border-left: 1px solid #6f95ee;
		background: #fff;
		box-shadow: 0 3px 8px #1d2f5022;
	}

	.ok {
		width: 9px;
		height: 9px;
		fill: #3fc47a;
	}

	.ok path {
		fill: none;
		stroke: #fff;
	}

	.toast button {
		margin-left: auto;
	}

	.arrow {
		position: absolute;
		top: 169px;
		left: 173px;
		width: 111px;
		height: 73px;
		fill: #fa5350;
		pointer-events: none;
	}
</style>
